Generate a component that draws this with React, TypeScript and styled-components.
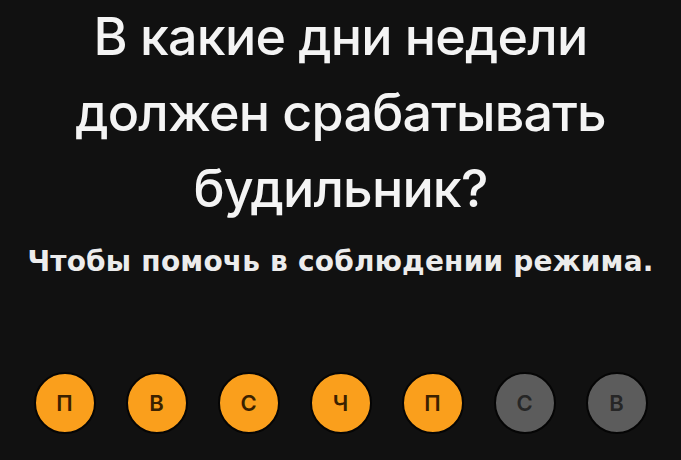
import React from "react";
import styled, { createGlobalStyle } from "styled-components";

const GlobalStyle = createGlobalStyle`
    html, body {
        margin: 0;
        padding: 0;
        background: #111111;
    }
    body {
        font-family: Inter, "Noto Sans", "Liberation Sans", sans-serif;
        -webkit-font-smoothing: antialiased;
    }
`

const Screen = styled.div`
    width: 681px;
    height: 460px;
    background: #111111;
    display: flex;
    flex-direction: column;
    align-items: center;
    overflow: hidden;
`

const Title = styled.h1`
    margin: -1px 0 0 0;
    font-weight: 500;
    font-size: 52px;
    line-height: 76px;
    letter-spacing: -0.8px;
    text-align: center;
    color: #f4f4f4;
`

const Subtitle = styled.p`
    margin: 18px 0 0 0;
    font-family: "DejaVu Sans", "Liberation Sans", sans-serif;
    font-weight: 700;
    font-size: 28px;
    line-height: 34px;
    letter-spacing: 0.2px;
    text-align: center;
    color: #ececec;
`

const Days = styled.div`
    display: flex;
    gap: 30px;
    margin-top: 93px;
`

const Day = styled.div<{ $active: boolean }>`
    width: 62px;
    height: 62px;
    border-radius: 50%;
    box-sizing: border-box;
    border: 2px solid #050505;
    display: flex;
    align-items: center;
    justify-content: center;
    font-size: 22px;
    font-weight: 600;
    background: ${({ $active }) => ($active ? "#fa9f1c" : "#5c5c5c")};
    color: ${({ $active }) => ($active ? "#3a2100" : "#262626")};
`

const days = [
    { label: "П", active: true },
    { label: "В", active: true },
    { label: "С", active: true },
    { label: "Ч", active: true },
    { label: "П", active: true },
    { label: "С", active: false },
    { label: "В", active: false },
]

const App: React.FC = () => {
    return (
        <>
            <GlobalStyle />
            <Screen>
                <Title>
                    В какие дни недели
                    <br />
                    должен срабатывать
                    <br />
                    будильник?
                </Title>
                <Subtitle>Чтобы помочь в соблюдении режима.</Subtitle>
                <Days>
                    {days.map((d, i) => (
                        <Day key={i} $active={d.active}>{d.label}</Day>
                    ))}
                </Days>
            </Screen>
        </>
    )
}

export default App
